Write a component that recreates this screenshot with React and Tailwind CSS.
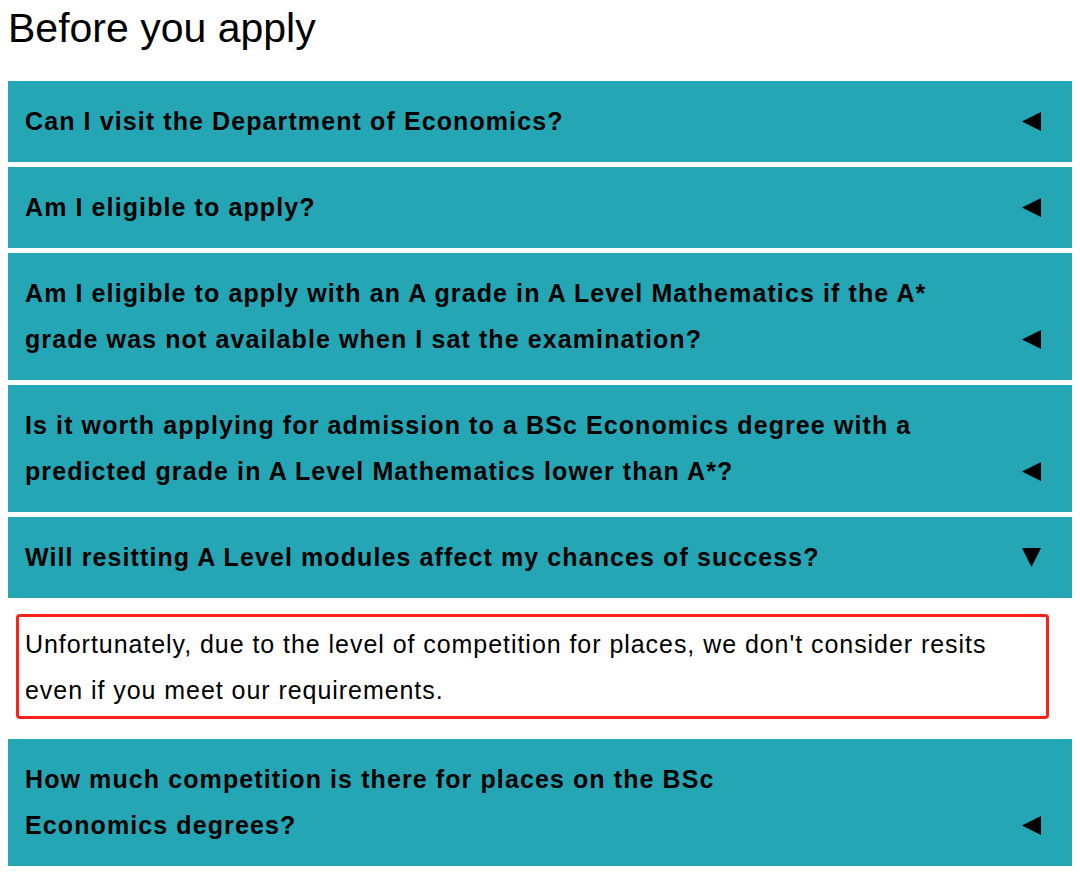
import React from "react";

const LeftArrow = () => (
  <svg width="19" height="19" viewBox="0 0 19 19" className="block">
    <polygon points="0,9.5 19,0 19,19" fill="#000" />
  </svg>
);

const DownArrow = () => (
  <svg width="19" height="19" viewBox="0 0 19 19" className="block">
    <polygon points="0,0 19,0 9.5,19" fill="#000" />
  </svg>
);

function Panel({ lines, open }) {
  return (
    <div className="flex items-end justify-between bg-[#25a6b5] pt-[17px] pb-[18px] pl-[17px] pr-[31px]">
      <div className="text-[25px] leading-[46px] font-bold tracking-[1.1px] text-black">
        {lines.map((l, i) => (
          <div key={i} className="whitespace-nowrap">{l}</div>
        ))}
      </div>
      <div className="h-[46px] flex items-center">
        {open ? <DownArrow /> : <LeftArrow />}
      </div>
    </div>
  );
}

export default function App() {
  return (
    <div className="w-[1080px] min-h-[879px] bg-white font-['Liberation_Sans',Arial,sans-serif] text-black">
      <h1 className="pl-2 pt-[5px] text-[41px] leading-[46px] font-normal">Before you apply</h1>
      <div className="mt-[30px] ml-2 w-[1064px] flex flex-col gap-[5px]">
        <Panel lines={["Can I visit the Department of Economics?"]} />
        <Panel lines={["Am I eligible to apply?"]} />
        <Panel
          lines={[
            "Am I eligible to apply with an A grade in A Level Mathematics if the A*",
            "grade was not available when I sat the examination?",
          ]}
        />
        <Panel
          lines={[
            "Is it worth applying for admission to a BSc Economics degree with a",
            "predicted grade in A Level Mathematics lower than A*?",
          ]}
        />
        <Panel lines={["Will resitting A Level modules affect my chances of success?"]} open />
        <div className="mt-[11px] mb-[15px] ml-2 mr-[23px] border-[3px] border-[#ff2018] rounded-[4px] pl-[6px] pt-[4px] pb-[3px] text-[25px] leading-[46px] tracking-[0.95px]">
          <div className="whitespace-nowrap">Unfortunately, due to the level of competition for places, we don't consider resits</div>
          <div className="whitespace-nowrap">even if you meet our requirements.</div>
        </div>
        <Panel
          lines={["How much competition is there for places on the BSc", "Economics degrees?"]}
        />
      </div>
    </div>
  );
}
